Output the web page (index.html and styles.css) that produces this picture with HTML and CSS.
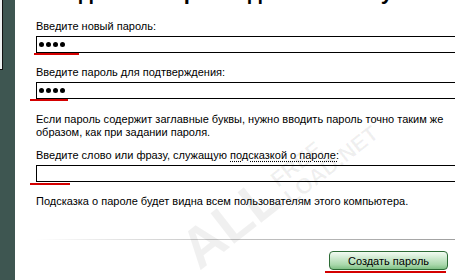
FILE: index.html
```html
<!DOCTYPE html>
<html lang="ru">
<head>
    <meta charset="UTF-8">
    <title>Создание пароля</title>
    <link rel="stylesheet" href="styles.css">
</head>
<body>

<div class="window">
    <aside class="sidebar">
        <div class="sidebar-panel"></div>
    </aside>

    <main class="content">
        <h1 class="title">Создание пароля для вашей учетной записи</h1>

        <div class="label first">Введите новый пароль:</div>
        <div class="field">
            <div class="input"><span class="dot"></span><span class="dot"></span><span class="dot"></span><span class="dot"></span></div>
            <span class="mark mark-new"></span>
        </div>

        <div class="label">Введите пароль для подтверждения:</div>
        <div class="field">
            <div class="input"><span class="dot"></span><span class="dot"></span><span class="dot"></span><span class="dot"></span></div>
            <span class="mark mark-confirm"></span>
        </div>

        <p class="note">Если пароль содержит заглавные буквы, нужно вводить пароль точно таким же образом, как при задании пароля.</p>

        <div class="label hint-label">Введите слово или фразу, служащую <a class="hint-link">подсказкой о пароле:</a></div>
        <div class="field">
            <div class="input"></div>
            <span class="mark mark-hint"></span>
        </div>

        <p class="note hint-note">Подсказка о пароле будет видна всем пользователям этого компьютера.</p>

        <div class="separator"></div>

        <div class="actions">
            <div class="field">
                <button class="btn-create">Создать пароль</button>
                <span class="mark mark-button"></span>
            </div>
        </div>
    </main>

    <div class="watermark">
        <span class="wm-big">ALL</span>
        <span class="wm-small">FREE<br>LOAD.NET</span>
    </div>
</div>

</body>
</html>
```

FILE: styles.css
```css
html, body {
    margin: 0;
    padding: 0;
    width: 455px;
    height: 280px;
    overflow: hidden;
    background: #fff;
}
body {
    font-family: "Liberation Sans", Arial, sans-serif;
    font-size: 11px;
    line-height: 13px;
    color: #000;
}
.window {
    display: flex;
    height: 280px;
    position: relative;
    overflow: hidden;
}
.sidebar {
    width: 15px;
    flex-shrink: 0;
    background: #3e5651;
}
.sidebar-panel {
    width: 3px;
    height: 70px;
    background: #eef0f0;
    border-right: 1px solid #111;
    border-bottom: 1px solid #111;
    box-sizing: border-box;
}
.content {
    flex: 1;
    padding-left: 21px;
    display: flex;
    flex-direction: column;
    min-width: 0;
}
.title {
    margin: -21px 0 0 0;
    font-size: 22px;
    line-height: 26px;
    font-weight: bold;
    white-space: nowrap;
    letter-spacing: 1px;
}
.label {
    margin-top: 13px;
    white-space: nowrap;
}
.label.first {
    margin-top: 15px;
}
.hint-label {
    margin-top: 10px;
}
.hint-link {
    color: #000;
    text-decoration: underline dotted;
    text-underline-offset: 2px;
}
.field {
    position: relative;
    margin-top: 3px;
}
.input {
    width: 440px;
    height: 17px;
    border: 1px solid #000;
    box-sizing: border-box;
    display: flex;
    align-items: center;
    gap: 2px;
    padding-left: 2px;
    background: #fff;
}
.dot {
    width: 5px;
    height: 5px;
    border-radius: 50%;
    background: #000;
}
.mark {
    position: absolute;
    height: 2px;
    background: #d40000;
}
.mark-new {
    left: -2px;
    top: 17px;
    width: 45px;
}
.mark-confirm {
    left: -6px;
    top: 17px;
    width: 38px;
}
.mark-hint {
    left: -6px;
    top: 18px;
    width: 40px;
}
.mark-button {
    left: -4px;
    top: 20px;
    width: 121px;
}
.note {
    margin: 14px 0 0 0;
    width: 410px;
}
.hint-note {
    margin-top: 13px;
}
.separator {
    margin-top: 31px;
    height: 1px;
    background: linear-gradient(to right, #fff 0%, #c8c8c8 40%, #a0a0a0 100%);
}
.actions {
    display: flex;
    justify-content: flex-end;
    padding-right: 7px;
    margin-top: 11px;
}
.actions .field {
    margin-top: 0;
}
.btn-create {
    width: 119px;
    height: 19px;
    padding: 0;
    font-family: "Liberation Sans", Arial, sans-serif;
    font-size: 11px;
    color: #000;
    border: 1px solid #2c6b35;
    border-radius: 4px;
    background: linear-gradient(to bottom, #f2fbf2 0%, #cfead0 35%, #a9d8ab 75%, #7fbf84 100%);
}
.watermark {
    position: absolute;
    left: 205px;
    top: 222px;
    transform: rotate(-38deg);
    transform-origin: left bottom;
    color: rgba(0, 0, 0, 0.06);
    font-weight: bold;
    display: flex;
    align-items: flex-end;
    gap: 4px;
    pointer-events: none;
}
.wm-big {
    font-size: 56px;
    line-height: 56px;
}
.wm-small {
    font-size: 22px;
    line-height: 22px;
}
```
